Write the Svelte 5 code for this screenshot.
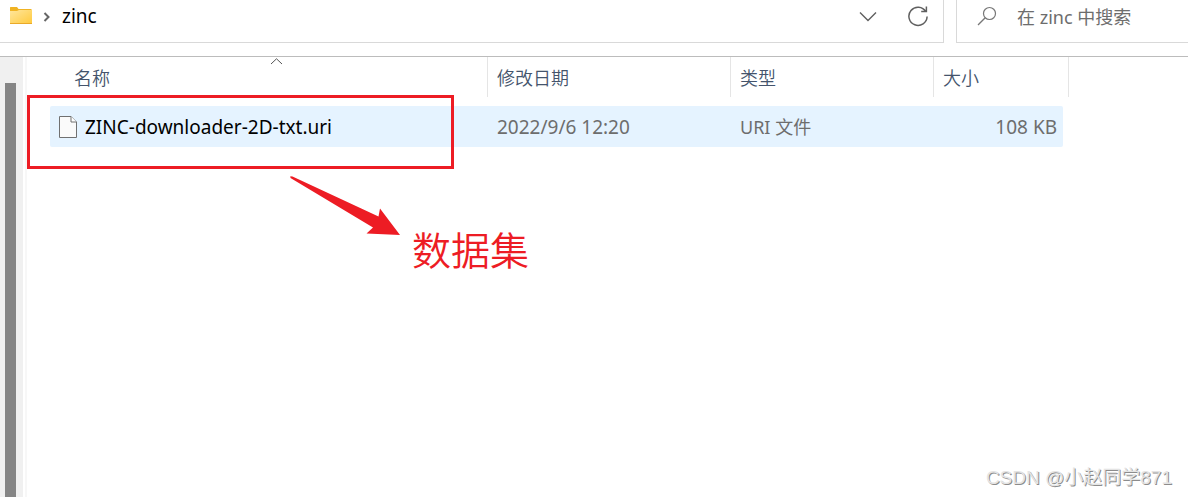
<script>
  const files = [
    { name: 'ZINC-downloader-2D-txt.uri', date: '2022/9/6 12:20', type: 'URI 文件', size: '108 KB' }
  ];
  let query = $state('');
</script>

<div class="window">
  <header>
    <nav class="address" aria-label="路径">
      <svg class="folder" width="24" height="18" viewBox="0 0 24 18" aria-hidden="true">
        <defs>
          <linearGradient id="folder-face" x1="0" y1="0" x2="1" y2="1">
            <stop offset="0" stop-color="#ffe69c" />
            <stop offset="1" stop-color="#ffca3e" />
          </linearGradient>
        </defs>
        <path d="M1 .6Q1 0 1.6 0H8L9.5 2H22.5V8H1Z" fill="#f0b323" />
        <path d="M1 4H8L10 3H23V16.5H1Z" fill="url(#folder-face)" />
        <path d="M1 16.5H23" stroke="#eaa928" />
      </svg>
      <svg class="crumb" width="8" height="10" viewBox="0 0 8 10" aria-hidden="true">
        <path d="M1.5 1L5.5 5L1.5 9" fill="none" stroke="#666" stroke-width="2" />
      </svg>
      <a href="#zinc">zinc</a>
      <div class="tools">
        <button aria-label="历史记录">
          <svg width="18" height="20" viewBox="0 0 18 20">
            <path d="M1 6.5L9 14.5L17 6.5" fill="none" stroke="#5f5f5f" stroke-width="1.4" />
          </svg>
        </button>
        <button aria-label="刷新">
          <svg width="22" height="22" viewBox="0 0 22 22">
            <path d="M18.8 6.6A9.1 9.1 0 1 0 20.1 11.5M19.4 1.5V6.6H14.2" fill="none" stroke="#5f5f5f" stroke-width="1.5" />
          </svg>
        </button>
      </div>
    </nav>
    <div class="search">
      <svg width="20" height="20" viewBox="0 0 20 20" aria-hidden="true">
        <circle cx="12.5" cy="7.5" r="6" fill="none" stroke="#777" stroke-width="1.2" />
        <path d="M8.2 11.8L1 19" stroke="#777" stroke-width="1.3" />
      </svg>
      <input type="text" aria-label="搜索" placeholder="在 zinc 中搜索" bind:value={query} />
    </div>
  </header>

  <main>
    <div class="scroll"><div class="thumb"></div></div>
    <div class="files">
      <table>
        <colgroup>
          <col class="c-name" /><col class="c-date" /><col class="c-type" /><col class="c-size" /><col class="c-edge" />
        </colgroup>
        <thead>
          <tr>
            <th>
              <div class="sorted">
                名称
                <svg width="13" height="7" viewBox="0 0 13 7" aria-hidden="true">
                  <path d="M1 6L6.5 .8L12 6" fill="none" stroke="#555" />
                </svg>
              </div>
            </th>
            <th>修改日期</th>
            <th>类型</th>
            <th colspan="2">大小</th>
          </tr>
        </thead>
        <tbody>
          {#each files as file}
            <tr>
              <td class="name">
                <div>
                  <svg width="18" height="22" viewBox="0 0 18 22" aria-hidden="true">
                    <path d="M.5 .5H12L17.5 6V21.5H.5Z" fill="#fafafa" stroke="#707070" />
                    <path d="M12 .5V6H17.5" fill="#fff" stroke="#707070" />
                  </svg>
                  {file.name}
                </div>
              </td>
              <td>{file.date}</td>
              <td class="type">{file.type}</td>
              <td class="size">{file.size}</td>
            </tr>
          {/each}
        </tbody>
      </table>
    </div>
  </main>

  <div class="frame"></div>
  <svg class="arrow" width="112" height="62" viewBox="0 0 112 62" aria-hidden="true">
    <path d="M1.3 .2L3.5 .5L89.5 40.5L91 32.5L111 59L77.5 57.5L84 51.5L1.5 2Z" fill="#ed1c24" />
  </svg>
  <div class="note">数据集</div>
  <div class="mark">CSDN @小赵同学871</div>
</div>

<style>
  :global(body) {
    margin: 0;
    background: #fff;
  }
  .window {
    position: relative;
    display: flex;
    flex-direction: column;
    min-height: 100vh;
    overflow: hidden;
    font: 19px/24px "Noto Sans", "Noto Sans CJK SC", sans-serif;
    color: #6d6d6d;
  }
  header {
    display: flex;
    gap: 12px;
    height: 43px;
    padding-bottom: 13px;
    border-bottom: 1px solid #bcbcbc;
  }
  .address,
  .search {
    box-sizing: border-box;
    display: flex;
    align-items: center;
    padding-bottom: 10px;
    border-bottom: 1px solid #d9d9d9;
  }
  .address {
    flex: 1;
    padding-left: 9px;
    border-right: 1px solid #d9d9d9;
  }
  .crumb {
    margin: 2px 11px 0 10px;
  }
  a {
    color: #000;
    text-decoration: none;
  }
  .tools {
    display: flex;
    gap: 30px;
    margin-left: auto;
    padding-right: 14px;
  }
  button {
    display: flex;
    align-items: center;
    padding: 0;
    border: 0;
    background: none;
  }
  .search {
    width: 232px;
    gap: 20px;
    padding-left: 20px;
    border-left: 1px solid #d9d9d9;
  }
  input {
    flex: 1;
    min-width: 0;
    padding: 2px 0 0;
    border: 0;
    outline: 0;
    background: none;
    font: inherit;
    font-size: 18px;
    color: #000;
  }
  input::placeholder {
    color: #6d6d6d;
    opacity: 1;
  }
  main {
    flex: 1;
    display: flex;
  }
  .scroll {
    display: flex;
    width: 11px;
    padding: 26px 7px 0 5px;
    background: #f0f0f0;
  }
  .thumb {
    flex: 1;
    background: #858585;
  }
  .files {
    flex: 1;
    min-width: 0;
    margin-left: 2px;
    padding-left: 23px;
    border-left: 2px solid #f7f7f7;
  }
  table {
    width: 1019px;
    table-layout: fixed;
    border-collapse: separate;
    border-spacing: 0;
  }
  .c-name { width: 438px; }
  .c-date { width: 243px; }
  .c-type { width: 203px; }
  .c-size { width: 129px; }
  .c-edge { width: 6px; }
  th {
    height: 40px;
    padding: 0 0 0 9px;
    border-right: 1px solid #e5e5e5;
    box-sizing: border-box;
    text-align: left;
    font-family: "Noto Sans CJK SC", sans-serif;
    font-size: 18px;
    font-weight: 350;
    color: #44546c;
  }
  th:first-child {
    padding-left: 16px;
  }
  .sorted {
    position: relative;
    padding-left: 8px;
    line-height: 40px;
  }
  .sorted svg {
    position: absolute;
    top: 1px;
    left: calc(50% - 7px);
  }
  tbody::before {
    content: "";
    display: block;
    height: 9px;
  }
  td {
    height: 41px;
    padding: 0 0 0 9px;
    background: #e5f3ff;
  }
  td.name {
    border-radius: 2px 0 0 2px;
    color: #000;
  }
  .name div {
    display: flex;
    align-items: center;
    gap: 8px;
  }
  td.type {
    font-size: 18px;
  }
  td.size {
    padding-right: 6px;
    border-radius: 0 2px 2px 0;
    text-align: right;
  }
  .frame {
    position: absolute;
    top: 95px;
    left: 27px;
    width: 421px;
    height: 68px;
    border: 3px solid #ed1c24;
  }
  .arrow {
    position: absolute;
    top: 176px;
    left: 289px;
  }
  .note {
    position: absolute;
    top: 223px;
    left: 412px;
    font-family: "Noto Sans CJK SC", sans-serif;
    font-size: 39px;
    font-weight: 350;
    line-height: 50px;
    color: #ed1c24;
  }
  .mark {
    position: absolute;
    right: 16px;
    bottom: 7px;
    font-family: "Liberation Sans", "Noto Sans CJK SC", sans-serif;
    font-size: 19px;
    color: #e4e4e4;
    text-shadow: 1px 1px 0 #8c8c8c;
  }
</style>
